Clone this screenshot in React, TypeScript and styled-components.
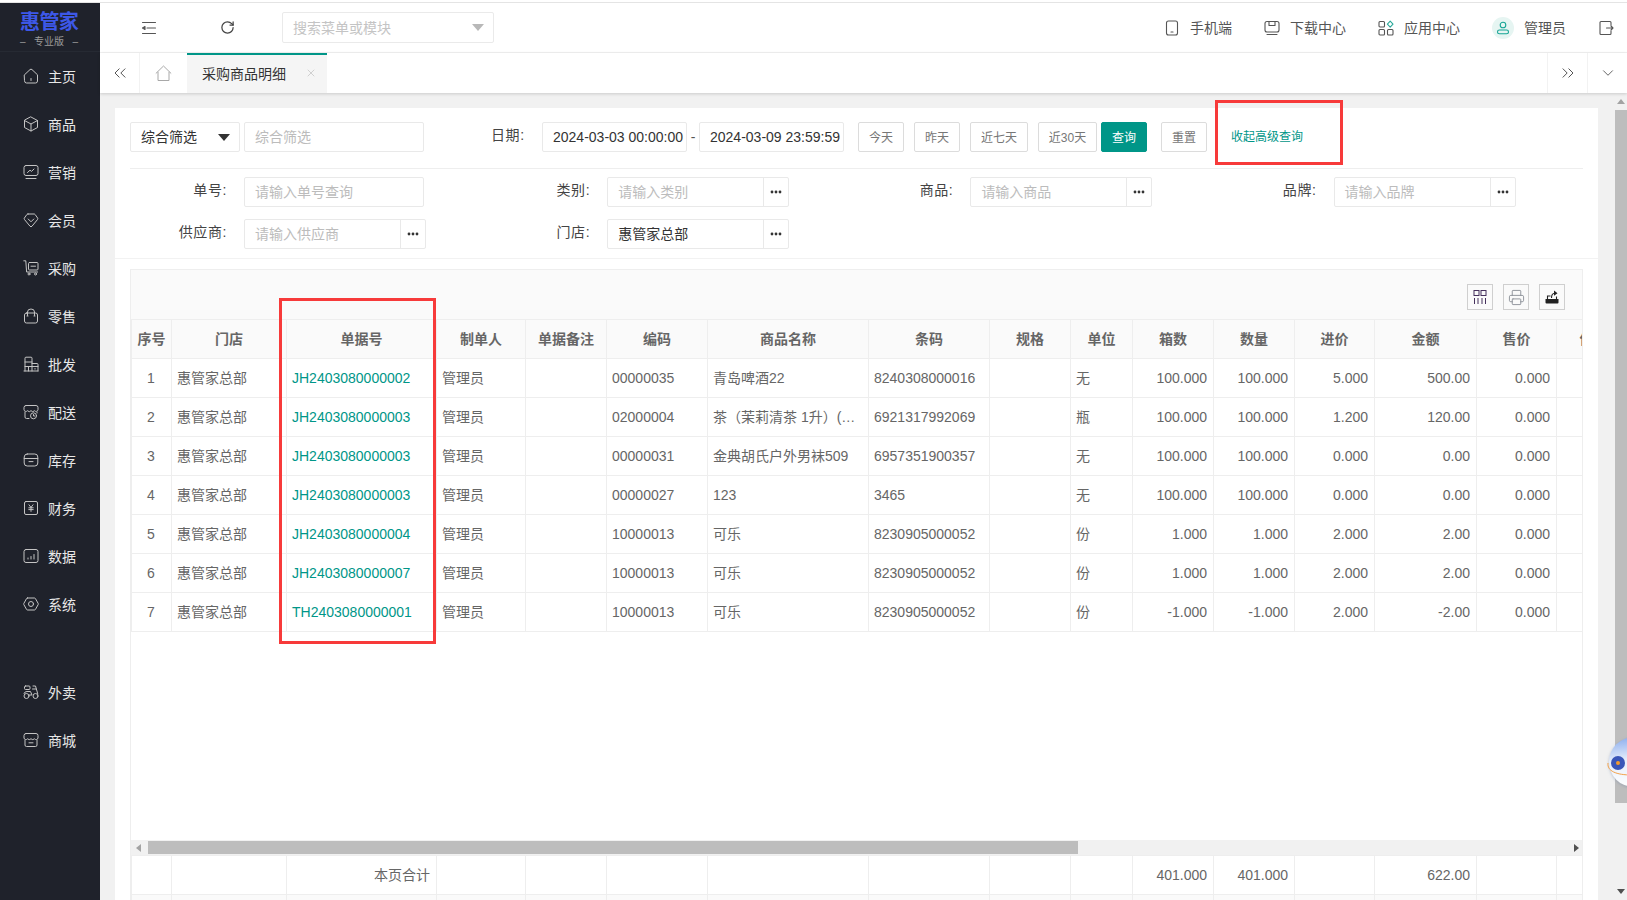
import React from 'react';
import styled, { createGlobalStyle } from 'styled-components';
import { ChevronDown, ChevronsLeft, ChevronsRight, Printer, RotateCw, X } from 'lucide-react';

const GlobalStyle = createGlobalStyle`
  html, body {
    margin: 0;
    padding: 0;
    overflow: hidden;
    background: #fff;
  }
  body, input, button {
    font-family: "Liberation Sans", "Noto Sans CJK SC", sans-serif;
    font-size: 14px;
  }
  * {
    box-sizing: border-box;
  }
`;

const Page = styled.div`
  position: relative;
  width: 1627px;
  height: 900px;
  overflow: hidden;
  display: flex;
  flex-direction: column;
`;

const TopLine = styled.div`
  height: 3px;
  flex: none;
  background: #fff;
  border-bottom: 1px solid #e4e4e4;
`;

const Body = styled.div`
  display: flex;
  flex: 1;
  min-height: 0;
`;

const Sidebar = styled.aside`
  width: 100px;
  flex: none;
  background: #1f222b;
`;

const Logo = styled.div`
  height: 49px;
  padding: 8px 0 0 20px;
  border-bottom: 1px solid #262a33;
`;

const LogoName = styled.div`
  width: 58px;
  font-size: 20px;
  line-height: 23px;
  letter-spacing: -0.6px;
  font-weight: 700;
  color: #3d58e8;
  white-space: nowrap;
`;

const LogoEdition = styled.div`
  width: 58px;
  display: flex;
  justify-content: space-between;
  margin-top: 1px;
  font-size: 10px;
  line-height: 14px;
  color: #9a9a9a;
`;

const NavItem = styled.div<{ $spaced?: boolean }>`
  height: 48px;
  margin-top: ${props => (props.$spaced ? '40px' : '0')};
  padding-left: 23px;
  display: flex;
  align-items: center;
  gap: 9px;
  color: #e8e8e8;
`;

const NavIcon = styled.svg`
  width: 16px;
  height: 16px;
  flex: none;
  fill: none;
  stroke: #c4c4c4;
  stroke-width: 1;
  stroke-linejoin: round;
  stroke-linecap: round;
`;

const Main = styled.main`
  flex: 1;
  min-width: 0;
  display: flex;
  flex-direction: column;
`;

const Header = styled.header`
  height: 50px;
  flex: none;
  display: flex;
  align-items: center;
  padding: 0 13px 0 41px;
  border-bottom: 1px solid #f2f2f2;
  color: #555;
`;

const HeaderIcon = styled.svg`
  width: 16px;
  height: 16px;
  flex: none;
  fill: none;
  stroke: #555;
  stroke-width: 1.1;
  stroke-linecap: round;
  stroke-linejoin: round;
`;

const RefreshSlot = styled.span`
  display: flex;
  margin-left: 63px;
  color: #444;
`;

const MenuSearch = styled.div`
  width: 212px;
  height: 31px;
  margin-left: 47px;
  padding: 0 9px 2px 10px;
  display: flex;
  align-items: center;
  justify-content: space-between;
  border: 1px solid #eaeaea;
  border-radius: 2px;
  color: #c4c4c4;
`;

const GreyCaret = styled.span`
  margin-top: 2px;
  border-style: solid;
  border-width: 7px 6px 0;
  border-color: #b8b8b8 transparent transparent;
`;

const HeaderActions = styled.div`
  margin-left: auto;
  display: flex;
  align-items: center;
  gap: 32px;
`;

const HeaderAction = styled.div`
  display: flex;
  align-items: center;
  gap: 10px;
`;

const HeaderText = styled.span`
  padding-bottom: 2px;
`;

const Avatar = styled.span`
  width: 22px;
  height: 22px;
  border-radius: 50%;
  background: #e6f5f2;
  display: flex;
  align-items: center;
  justify-content: center;
`;

const TabBar = styled.nav`
  position: relative;
  z-index: 1;
  height: 40px;
  flex: none;
  display: flex;
  background: #fff;
  box-shadow: 0 1px 3px rgba(0, 0, 0, 0.16);
`;

const TabControl = styled.div<{ $side?: 'left' | 'right' }>`
  width: 40px;
  display: flex;
  align-items: center;
  justify-content: center;
  color: #555;
  border-right: ${props => (props.$side === 'left' ? '1px solid #f2f2f2' : '0')};
  border-left: ${props => (props.$side === 'right' ? '1px solid #f2f2f2' : '0')};
`;

const HomeTab = styled.div`
  width: 47px;
  display: flex;
  align-items: center;
  justify-content: center;
`;

const ActiveTab = styled.div`
  width: 140px;
  padding: 0 10px 2px 15px;
  display: flex;
  align-items: center;
  justify-content: space-between;
  background: #f5f5f5;
  border-top: 2px solid #009688;
  color: #333;
`;

const TabSpacer = styled.div`
  flex: 1;
`;

const Content = styled.div`
  flex: 1;
  min-height: 0;
  display: flex;
  background: #f1f1f1;
`;

const Card = styled.section`
  width: 1483px;
  margin: 15px 17px 0 15px;
  padding: 14px 15px 0;
  flex: none;
  background: #fff;
`;

const FilterBar = styled.div`
  display: flex;
  align-items: center;
  padding-bottom: 16px;
  border-bottom: 1px solid #eee;
`;

const Field = styled.div<{ $width: number; $muted?: boolean }>`
  width: ${props => props.$width}px;
  height: 30px;
  flex: none;
  padding: 0 0 2px 10px;
  display: flex;
  align-items: center;
  border: 1px solid #e9e9e9;
  border-radius: 2px;
  background: #fff;
  color: ${props => (props.$muted ? '#bcbcbc' : '#333')};
  white-space: nowrap;
`;

const DateField = styled(Field)`
  padding-bottom: 0;
`;

const SelectField = styled(Field)`
  justify-content: space-between;
  padding-right: 9px;
  margin-right: 4px;
`;

const BlackCaret = styled.span`
  margin-top: 2px;
  border-style: solid;
  border-width: 7px 6px 0;
  border-color: #333 transparent transparent;
`;

const DateLabel = styled.span`
  width: 34px;
  margin: 0 17px 0 67px;
  padding-bottom: 6px;
  flex: none;
  letter-spacing: 0.6px;
  color: #444;
  white-space: nowrap;
`;

const DateDash = styled.span`
  width: 12px;
  text-align: center;
  color: #555;
`;

const QuickButtons = styled.div`
  display: flex;
  gap: 10px;
  margin: 0 4px 0 14px;
`;

const Button = styled.button<{ $width?: number }>`
  width: ${props => props.$width ?? 46}px;
  height: 30px;
  padding: 0 0 2px;
  flex: none;
  border: 1px solid #dcdcdc;
  border-radius: 2px;
  background: #fff;
  color: #777;
  font-size: 12px;
  white-space: nowrap;
`;

const PrimaryButton = styled(Button)`
  border-color: #009688;
  background: #009688;
  color: #fff;
`;

const ResetButton = styled(Button)`
  margin-left: 14px;
`;

const CollapseLink = styled.span`
  margin-left: 24px;
  padding-bottom: 3px;
  font-size: 12px;
  color: #009688;
  white-space: nowrap;
`;

const AdvancedGrid = styled.div`
  display: grid;
  grid-template-columns: repeat(4, 363.2px);
  row-gap: 12px;
  margin: 0 -15px;
  padding: 8px 15px 9px;
  border-bottom: 1px solid #f2f2f2;
`;

const FilterItem = styled.div`
  display: flex;
  align-items: center;
`;

const FilterLabel = styled.label`
  width: 97px;
  margin-right: 17px;
  padding-bottom: 6px;
  flex: none;
  text-align: right;
  letter-spacing: 0.6px;
  color: #444;
`;

const PickerField = styled(Field)`
  padding: 0 0 0 10px;
  justify-content: space-between;
`;

const PickerText = styled.span`
  padding-bottom: 2px;
`;

const PickerButton = styled.span`
  width: 25px;
  height: 100%;
  display: flex;
  align-items: center;
  justify-content: center;
  border-left: 1px solid #e9e9e9;
`;

const Panel = styled.div`
  margin-top: 10px;
  border: 1px solid #eee;
  border-bottom: 0;
`;

const PanelToolbar = styled.div`
  height: 49px;
  padding: 14px 17px 0 0;
  display: flex;
  justify-content: flex-end;
  gap: 10px;
  background: #fafafa;
`;

const ToolButton = styled.span`
  width: 26px;
  height: 26px;
  display: flex;
  align-items: center;
  justify-content: center;
  border: 1px solid #cfcfcf;
  color: #8a8f96;
`;

const TableClip = styled.div`
  overflow: hidden;
`;

const GridTable = styled.table`
  width: 1513px;
  table-layout: fixed;
  border-collapse: collapse;
`;

const HeadCell = styled.th`
  height: 39px;
  padding: 0 5px 2px;
  background: #fafafa;
  border: 1px solid #eee;
  color: #666;
  font-weight: 700;
  white-space: nowrap;
  overflow: hidden;
`;

const Cell = styled.td<{ $align?: 'left' | 'center' | 'right'; $cjk?: boolean }>`
  height: 39px;
  padding: 0 6px ${props => (props.$cjk ? '2px' : '0')} 5px;
  border: 1px solid #eee;
  color: #666;
  text-align: ${props => props.$align ?? 'left'};
  white-space: nowrap;
  overflow: hidden;
`;

const LinkCell = styled(Cell)`
  color: #009688;
`;

const EmptyRow = styled.tr`
  background: #fafafa;
`;

const TableBlank = styled.div`
  height: 208px;
`;

const HScroll = styled.div`
  height: 15px;
  display: flex;
  align-items: center;
  background: #f1f1f1;
`;

const ScrollArrowLeft = styled.span`
  margin: 0 7px 0 5px;
  flex: none;
  border-style: solid;
  border-width: 4px 5px 4px 0;
  border-color: transparent #a3a3a3 transparent transparent;
`;

const HThumb = styled.div`
  width: 930px;
  height: 13px;
  background: #bdbdbd;
`;

const ScrollArrowRight = styled.span`
  margin: 0 3px 0 auto;
  border-style: solid;
  border-width: 4px 0 4px 5px;
  border-color: transparent transparent transparent #505050;
`;

const VScroll = styled.div`
  width: 12px;
  flex: none;
  display: flex;
  flex-direction: column;
  align-items: center;
  background: #f1f1f1;
`;

const ArrowBox = styled.div`
  height: 17px;
  flex: none;
  display: flex;
  align-items: center;
  justify-content: center;
`;

const ArrowUp = styled.span`
  border-style: solid;
  border-width: 0 4px 5px;
  border-color: transparent transparent #a3a3a3;
`;

const ArrowDown = styled.span`
  border-style: solid;
  border-width: 5px 4px 0;
  border-color: #505050 transparent transparent;
`;

const VThumb = styled.div`
  width: 12px;
  height: 693px;
  flex: none;
  background: #bdbdbd;
`;

const VGap = styled.div`
  flex: 1;
`;

const RedFrame = styled.div<{ $left: number; $top: number; $width: number; $height: number }>`
  position: absolute;
  left: ${props => props.$left}px;
  top: ${props => props.$top}px;
  width: ${props => props.$width}px;
  height: ${props => props.$height}px;
  border: 3px solid #f73a3a;
  pointer-events: none;
`;

const Mascot = styled.svg`
  position: absolute;
  left: 1606px;
  top: 735px;
  width: 54px;
  height: 58px;
`;

const navItems: { label: string; spaced?: boolean; icon: React.ReactNode }[] = [
  {
    label: '主页',
    icon: <path d="M1.5 6.8 7 1.6a1.5 1.5 0 0 1 2 0l5.5 5.2v6.2a2 2 0 0 1-2 2h-9a2 2 0 0 1-2-2zM8 10.5v2" />,
  },
  {
    label: '商品',
    icon: <path d="M8 1l6.5 3.5v7L8 15l-6.5-3.5v-7zM1.5 4.5 8 8l6.5-3.5M8 8v7" />,
  },
  {
    label: '营销',
    icon: (
      <>
        <rect x="1" y="1.5" width="14" height="10" rx="2" />
        <path d="M4.5 8.5 7 6.2l1.5 1.2L11 5M3 14.5h10" />
      </>
    ),
  },
  {
    label: '会员',
    icon: <path d="M5 2h6a1.5 1.5 0 0 1 1.2.6L14.6 6a1.2 1.2 0 0 1 0 1.4L9 14.2a1.3 1.3 0 0 1-2 0L1.4 7.4a1.2 1.2 0 0 1 0-1.4l2.4-3.4A1.5 1.5 0 0 1 5 2zM5.2 7 8 9.8 10.8 7" />,
  },
  {
    label: '采购',
    icon: (
      <>
        <path d="M0.8 0.8h2L3.6 12h11" />
        <rect x="5.5" y="2.5" width="9.5" height="7.5" rx="1" />
        <path d="M8 6.2h4.5" />
        <circle cx="6" cy="14" r="1" />
        <circle cx="12.5" cy="14" r="1" />
      </>
    ),
  },
  {
    label: '零售',
    icon: (
      <>
        <rect x="1.5" y="5" width="13" height="10" rx="2" />
        <path d="M4.5 7.5V4a3.5 3 0 0 1 7 0v3.5M4 8h1M11 8h1" />
      </>
    ),
  },
  {
    label: '批发',
    icon: <path d="M2 15V2.2A1 1 0 0 1 3 1.2h5a1 1 0 0 1 1 1V15M9 7.5h5a1 1 0 0 1 1 1V15M1 15h14M2 6h7M2 10.5h13M5.5 10.5V15M12 12.5v.6" />,
  },
  {
    label: '配送',
    icon: (
      <>
        <path d="M3 1.5h10a2 2 0 0 1 2 2v2.2a2 2 0 0 1-3.5 1 2.3 2.3 0 0 1-3.5 0 2.3 2.3 0 0 1-3.5 0 2 2 0 0 1-3.5-1V3.5a2 2 0 0 1 2-2zM2 8v5a1.5 1.5 0 0 0 1.5 1.5H6M14 8v1" />
        <circle cx="10.5" cy="11.8" r="3" />
        <path d="M10.5 10.5V12h1.2" />
      </>
    ),
  },
  {
    label: '库存',
    icon: (
      <>
        <rect x="1.2" y="2" width="13.6" height="12" rx="3" />
        <path d="M1.2 6.5h13.6M6 9.6h4" />
      </>
    ),
  },
  {
    label: '财务',
    icon: (
      <>
        <rect x="1.5" y="1.5" width="13" height="13" rx="1.5" />
        <path d="M6 4.8 8 7.4l2-2.6M5.8 7.8h4.4M5.8 9.6h4.4M8 7.4v4" />
      </>
    ),
  },
  {
    label: '数据',
    icon: (
      <>
        <rect x="1" y="1.5" width="14" height="13" rx="2" />
        <path d="M5 11v-1M8 11V8.5M11 11V6.5" />
      </>
    ),
  },
  {
    label: '系统',
    icon: (
      <>
        <path d="M4.5 2h7a1 1 0 0 1 .9.5l2.8 5a1 1 0 0 1 0 1l-2.8 5a1 1 0 0 1-.9.5h-7a1 1 0 0 1-.9-.5L.8 8.5a1 1 0 0 1 0-1l2.8-5a1 1 0 0 1 .9-.5z" />
        <circle cx="8" cy="8" r="2.5" />
      </>
    ),
  },
  {
    label: '外卖',
    spaced: true,
    icon: (
      <>
        <rect x="1.5" y="2" width="5.5" height="3.5" rx="1" />
        <circle cx="3.5" cy="12" r="2.5" />
        <circle cx="12.5" cy="12" r="2.5" />
        <path d="M1 9.5a3 3 0 0 1 3-2h3.5L9 11H6M10 2h2.5l2.3 8M9.5 5H13" />
      </>
    ),
  },
  {
    label: '商城',
    icon: (
      <>
        <path d="M3 1.5h10a2 2 0 0 1 2 2V6a2 2 0 0 1-3.5.8 2.5 2.5 0 0 1-3.5 0 2.5 2.5 0 0 1-3.5 0A2 2 0 0 1 1 6V3.5a2 2 0 0 1 2-2z" />
        <path d="M2 8v5a1.5 1.5 0 0 0 1.5 1.5h9A1.5 1.5 0 0 0 14 13V8M6 10.8h4" />
      </>
    ),
  },
];

const columnWidths = [40, 115, 150, 89, 81, 101, 161, 121, 81, 62, 81, 81, 80, 102, 80, 88];

const headers = [
  '序号', '门店', '单据号', '制单人', '单据备注', '编码', '商品名称', '条码',
  '规格', '单位', '箱数', '数量', '进价', '金额', '售价', '供应商',
];

const rows = [
  { no: 'JH2403080000002', code: '00000035', name: '青岛啤酒22', bar: '8240308000016', unit: '无', box: '100.000', qty: '100.000', price: '5.000', amount: '500.00' },
  { no: 'JH2403080000003', code: '02000004', name: '茶（茉莉清茶 1升）(…', bar: '6921317992069', unit: '瓶', box: '100.000', qty: '100.000', price: '1.200', amount: '120.00' },
  { no: 'JH2403080000003', code: '00000031', name: '金典胡氏户外男袜509', bar: '6957351900357', unit: '无', box: '100.000', qty: '100.000', price: '0.000', amount: '0.00' },
  { no: 'JH2403080000003', code: '00000027', name: '123', bar: '3465', unit: '无', box: '100.000', qty: '100.000', price: '0.000', amount: '0.00' },
  { no: 'JH2403080000004', code: '10000013', name: '可乐', bar: '8230905000052', unit: '份', box: '1.000', qty: '1.000', price: '2.000', amount: '2.00' },
  { no: 'JH2403080000007', code: '10000013', name: '可乐', bar: '8230905000052', unit: '份', box: '1.000', qty: '1.000', price: '2.000', amount: '2.00' },
  { no: 'TH2403080000001', code: '10000013', name: '可乐', bar: '8230905000052', unit: '份', box: '-1.000', qty: '-1.000', price: '2.000', amount: '-2.00' },
];

const Columns = () => (
  <colgroup>
    {columnWidths.map((width, index) => (
      <col key={index} width={width} />
    ))}
  </colgroup>
);

const Dots = () => (
  <svg width="12" height="4" viewBox="0 0 12 4">
    <circle cx="2" cy="2" r="1.4" fill="#333" />
    <circle cx="6" cy="2" r="1.4" fill="#333" />
    <circle cx="10" cy="2" r="1.4" fill="#333" />
  </svg>
);

const Picker: React.FC<{ value?: string; placeholder?: string }> = ({ value, placeholder }) => (
  <PickerField $width={182} $muted={!value}>
    <PickerText>{value ?? placeholder}</PickerText>
    <PickerButton>
      <Dots />
    </PickerButton>
  </PickerField>
);

const App: React.FC = () => {
  return (
    <Page>
      <GlobalStyle />
      <TopLine />
      <Body>
        <Sidebar>
          <Logo>
            <LogoName>惠管家</LogoName>
            <LogoEdition>
              <span>–</span>
              <span>专业版</span>
              <span>–</span>
            </LogoEdition>
          </Logo>
          {navItems.map(item => (
            <NavItem key={item.label} $spaced={item.spaced}>
              <NavIcon viewBox="0 0 16 16">{item.icon}</NavIcon>
              {item.label}
            </NavItem>
          ))}
        </Sidebar>
        <Main>
          <Header>
            <HeaderIcon viewBox="0 0 16 16">
              <path d="M1.5 2.5h13M6 8h8.5M1.5 13.5h13" />
              <path d="M1.5 8 4 6.5v3z" fill="#555" />
            </HeaderIcon>
            <RefreshSlot>
              <RotateCw size={15} strokeWidth={2} />
            </RefreshSlot>
            <MenuSearch>
              搜索菜单或模块
              <GreyCaret />
            </MenuSearch>
            <HeaderActions>
              <HeaderAction>
                <HeaderIcon viewBox="0 0 16 16">
                  <rect x="2.5" y="1" width="11" height="14" rx="2" />
                  <path d="M7 12h2" />
                </HeaderIcon>
                <HeaderText>手机端</HeaderText>
              </HeaderAction>
              <HeaderAction>
                <HeaderIcon viewBox="0 0 16 16">
                  <rect x="1" y="1.5" width="14" height="10.5" rx="2" />
                  <path d="M5 1.5v4h6v-4M3 14.5h10" />
                </HeaderIcon>
                <HeaderText>下载中心</HeaderText>
              </HeaderAction>
              <HeaderAction>
                <HeaderIcon viewBox="0 0 16 16">
                  <rect x="1" y="1.5" width="5.5" height="5.5" rx="1" />
                  <rect x="1" y="9.5" width="5.5" height="5.5" rx="1" />
                  <rect x="9.5" y="9.5" width="5.5" height="5.5" rx="1" />
                  <path d="M12.2 1.2 15 4.2l-2.8 3-2.8-3z" stroke="#2aa99a" />
                </HeaderIcon>
                <HeaderText>应用中心</HeaderText>
              </HeaderAction>
              <HeaderAction>
                <Avatar>
                  <svg width="14" height="14" viewBox="0 0 14 14" fill="none" stroke="#16a595" strokeWidth="1.1">
                    <circle cx="7" cy="4" r="2.8" />
                    <rect x="1.5" y="9" width="11" height="3.8" rx="1.9" />
                  </svg>
                </Avatar>
                <HeaderText>管理员</HeaderText>
              </HeaderAction>
              <HeaderIcon viewBox="0 0 16 16">
                <path d="M13 5V2.5a1 1 0 0 0-1-1H3a1 1 0 0 0-1 1v11a1 1 0 0 0 1 1h9a1 1 0 0 0 1-1V11M8.5 8H15M13 6l2 2-2 2" />
              </HeaderIcon>
            </HeaderActions>
          </Header>
          <TabBar>
            <TabControl $side="left">
              <ChevronsLeft size={20} strokeWidth={1.2} />
            </TabControl>
            <HomeTab>
              <svg width="17" height="17" viewBox="0 0 17 17" fill="none" stroke="#a8a8a8" strokeWidth="1">
                <path d="M0.8 8.5 8.5 1l7.7 7.5M3 6.8v8.7h11V6.8" />
              </svg>
            </HomeTab>
            <ActiveTab>
              采购商品明细
              <X size={12} color="#bbb" strokeWidth={1.3} />
            </ActiveTab>
            <TabSpacer />
            <TabControl $side="right">
              <ChevronsRight size={20} strokeWidth={1.2} />
            </TabControl>
            <TabControl $side="right">
              <ChevronDown size={18} strokeWidth={1.2} />
            </TabControl>
          </TabBar>
          <Content>
            <Card>
              <FilterBar>
                <SelectField $width={110}>
                  综合筛选
                  <BlackCaret />
                </SelectField>
                <Field $width={180} $muted>综合筛选</Field>
                <DateLabel>日期:</DateLabel>
                <DateField $width={145}>2024-03-03 00:00:00</DateField>
                <DateDash>-</DateDash>
                <DateField $width={145}>2024-03-09 23:59:59</DateField>
                <QuickButtons>
                  <Button>今天</Button>
                  <Button>昨天</Button>
                  <Button $width={58}>近七天</Button>
                  <Button $width={59}>近30天</Button>
                </QuickButtons>
                <PrimaryButton>查询</PrimaryButton>
                <ResetButton>重置</ResetButton>
                <CollapseLink>收起高级查询</CollapseLink>
              </FilterBar>
              <AdvancedGrid>
                <FilterItem>
                  <FilterLabel>单号:</FilterLabel>
                  <Field $width={180} $muted>请输入单号查询</Field>
                </FilterItem>
                <FilterItem>
                  <FilterLabel>类别:</FilterLabel>
                  <Picker placeholder="请输入类别" />
                </FilterItem>
                <FilterItem>
                  <FilterLabel>商品:</FilterLabel>
                  <Picker placeholder="请输入商品" />
                </FilterItem>
                <FilterItem>
                  <FilterLabel>品牌:</FilterLabel>
                  <Picker placeholder="请输入品牌" />
                </FilterItem>
                <FilterItem>
                  <FilterLabel>供应商:</FilterLabel>
                  <Picker placeholder="请输入供应商" />
                </FilterItem>
                <FilterItem>
                  <FilterLabel>门店:</FilterLabel>
                  <Picker value="惠管家总部" />
                </FilterItem>
              </AdvancedGrid>
              <Panel>
                <PanelToolbar>
                  <ToolButton>
                    <svg width="16" height="16" viewBox="0 0 16 16" fill="none" stroke="#45305c" strokeWidth="1">
                      <rect x="2" y="1.5" width="5" height="5" />
                      <rect x="9" y="1.5" width="5" height="5" />
                      <path d="M2.5 9v6M6 9v6M10 9v6M13.5 9v6" />
                    </svg>
                  </ToolButton>
                  <ToolButton>
                    <Printer size={17} strokeWidth={1.3} />
                  </ToolButton>
                  <ToolButton>
                    <svg width="16" height="16" viewBox="0 0 16 16" fill="#222">
                      <path d="M1.5 10h13v3.5a1 1 0 0 1-1 1h-11a1 1 0 0 1-1-1z" />
                      <path d="M3.5 10V7h3M12.5 10V7.5M7.500 9c0-3 1-4.800 3.200-4.800" fill="none" stroke="#222" strokeWidth="1.1" />
                      <path d="M10 1.5l3.500 2.700L10 6.800z" />
                    </svg>
                  </ToolButton>
                </PanelToolbar>
                <TableClip>
                  <GridTable>
                    <Columns />
                    <thead>
                      <tr>
                        {headers.map(title => (
                          <HeadCell key={title}>{title}</HeadCell>
                        ))}
                      </tr>
                    </thead>
                    <tbody>
                      {rows.map((row, index) => (
                        <tr key={index}>
                          <Cell $align="center">{index + 1}</Cell>
                          <Cell $cjk>惠管家总部</Cell>
                          <LinkCell>{row.no}</LinkCell>
                          <Cell $cjk>管理员</Cell>
                          <Cell />
                          <Cell>{row.code}</Cell>
                          <Cell $cjk={row.name !== '123'}>{row.name}</Cell>
                          <Cell>{row.bar}</Cell>
                          <Cell />
                          <Cell $cjk>{row.unit}</Cell>
                          <Cell $align="right">{row.box}</Cell>
                          <Cell $align="right">{row.qty}</Cell>
                          <Cell $align="right">{row.price}</Cell>
                          <Cell $align="right">{row.amount}</Cell>
                          <Cell $align="right">0.000</Cell>
                          <Cell />
                        </tr>
                      ))}
                    </tbody>
                  </GridTable>
                  <TableBlank />
                  <HScroll>
                    <ScrollArrowLeft />
                    <HThumb />
                    <ScrollArrowRight />
                  </HScroll>
                  <GridTable>
                    <Columns />
                    <tbody>
                      <tr>
                        <Cell />
                        <Cell />
                        <Cell $align="right" $cjk>本页合计</Cell>
                        <Cell />
                        <Cell />
                        <Cell />
                        <Cell />
                        <Cell />
                        <Cell />
                        <Cell />
                        <Cell $align="right">401.000</Cell>
                        <Cell $align="right">401.000</Cell>
                        <Cell />
                        <Cell $align="right">622.00</Cell>
                        <Cell />
                        <Cell />
                      </tr>
                      <EmptyRow>
                        {columnWidths.map((_, index) => (
                          <Cell key={index} />
                        ))}
                      </EmptyRow>
                    </tbody>
                  </GridTable>
                </TableClip>
              </Panel>
            </Card>
            <VScroll>
              <ArrowBox>
                <ArrowUp />
              </ArrowBox>
              <VThumb />
              <VGap />
              <ArrowBox>
                <ArrowDown />
              </ArrowBox>
            </VScroll>
          </Content>
        </Main>
      </Body>
      <RedFrame $left={1215} $top={100} $width={128} $height={65} />
      <RedFrame $left={279} $top={298} $width={157} $height={346} />
      <Mascot viewBox="0 0 54 58">
        <defs>
          <linearGradient id="mascotBody" x1="0.4" y1="0" x2="0.5" y2="1">
            <stop offset="0" stopColor="#8fb0ee" />
            <stop offset="0.45" stopColor="#e6eefb" />
            <stop offset="1" stopColor="#ffffff" />
          </linearGradient>
          <filter id="mascotShadow" x="-20%" y="-20%" width="140%" height="140%">
            <feDropShadow dx="0" dy="1" stdDeviation="1.5" floodColor="#7a8aa8" floodOpacity="0.5" />
          </filter>
        </defs>
        <circle cx="28" cy="27" r="25" fill="url(#mascotBody)" filter="url(#mascotShadow)" />
        <path d="M2 28c-1 8 8 12 24 12 10 0 18-2 26-4" fill="none" stroke="#f3a24a" strokeWidth="1" />
        <circle cx="12" cy="28" r="7" fill="#3a56b8" />
        <circle cx="12" cy="28" r="2" fill="#f39a2d" />
      </Mascot>
    </Page>
  );
};

export default App;
